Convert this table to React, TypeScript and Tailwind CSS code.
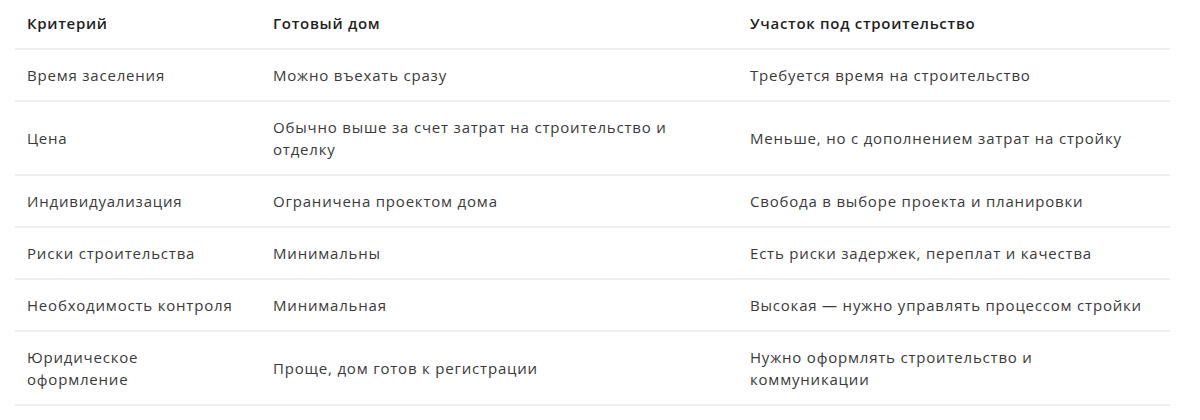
import React from 'react';

type Row = { criterion: React.ReactNode; ready: React.ReactNode; plot: React.ReactNode };

// Строки сравнения
const ROWS: Row[] = [
  { criterion: 'Время заселения', ready: 'Можно въехать сразу', plot: 'Требуется время на строительство' },
  {
    criterion: 'Цена',
    ready: (<>Обычно выше за счет затрат на строительство и<br />отделку</>),
    plot: 'Меньше, но с дополнением затрат на стройку',
  },
  { criterion: 'Индивидуализация', ready: 'Ограничена проектом дома', plot: 'Свобода в выборе проекта и планировки' },
  { criterion: 'Риски строительства', ready: 'Минимальны', plot: 'Есть риски задержек, переплат и качества' },
  { criterion: 'Необходимость контроля', ready: 'Минимальная', plot: 'Высокая — нужно управлять процессом стройки' },
  {
    criterion: (<>Юридическое<br />оформление</>),
    ready: 'Проще, дом готов к регистрации',
    plot: (<>Нужно оформлять строительство и<br />коммуникации</>),
  },
];

export default function App() {
  return (
    <div className="w-[1200px] h-[420px] bg-white pl-[15px] pr-[30px]" style={{ fontFamily: '"Open Sans", "Noto Sans", sans-serif' }}>
      <table className="w-[1155px] border-collapse table-fixed">
        <colgroup>
          <col className="w-[246px]" />
          <col className="w-[477px]" />
          <col className="w-[432px]" />
        </colgroup>
        <thead>
          <tr className="border-b-2 border-[#eeeeee]">
            <th className="text-left font-semibold text-[15px] tracking-[0.7px] leading-[22px] text-[#1f1f1f] px-3 pt-[12px] pb-[14px]">Критерий</th>
            <th className="text-left font-semibold text-[15px] tracking-[0.7px] leading-[22px] text-[#1f1f1f] px-3 pt-[12px] pb-[14px]">Готовый дом</th>
            <th className="text-left font-semibold text-[15px] tracking-[0.7px] leading-[22px] text-[#1f1f1f] px-3 pt-[12px] pb-[14px]">Участок под строительство</th>
          </tr>
        </thead>
        <tbody>
          {ROWS.map((r, i) => (
            <tr key={i} className="border-b-2 border-[#eeeeee]">
              <td className="align-middle text-[15px] tracking-[0.8px] leading-[22px] text-[#3a3a3a] px-3 py-[14px]">{r.criterion}</td>
              <td className="align-middle text-[15px] tracking-[0.8px] leading-[22px] text-[#3a3a3a] px-3 py-[14px]">{r.ready}</td>
              <td className="align-middle text-[15px] tracking-[0.8px] leading-[22px] text-[#3a3a3a] px-3 py-[14px]">{r.plot}</td>
            </tr>
          ))}
        </tbody>
      </table>
    </div>
  );
}
